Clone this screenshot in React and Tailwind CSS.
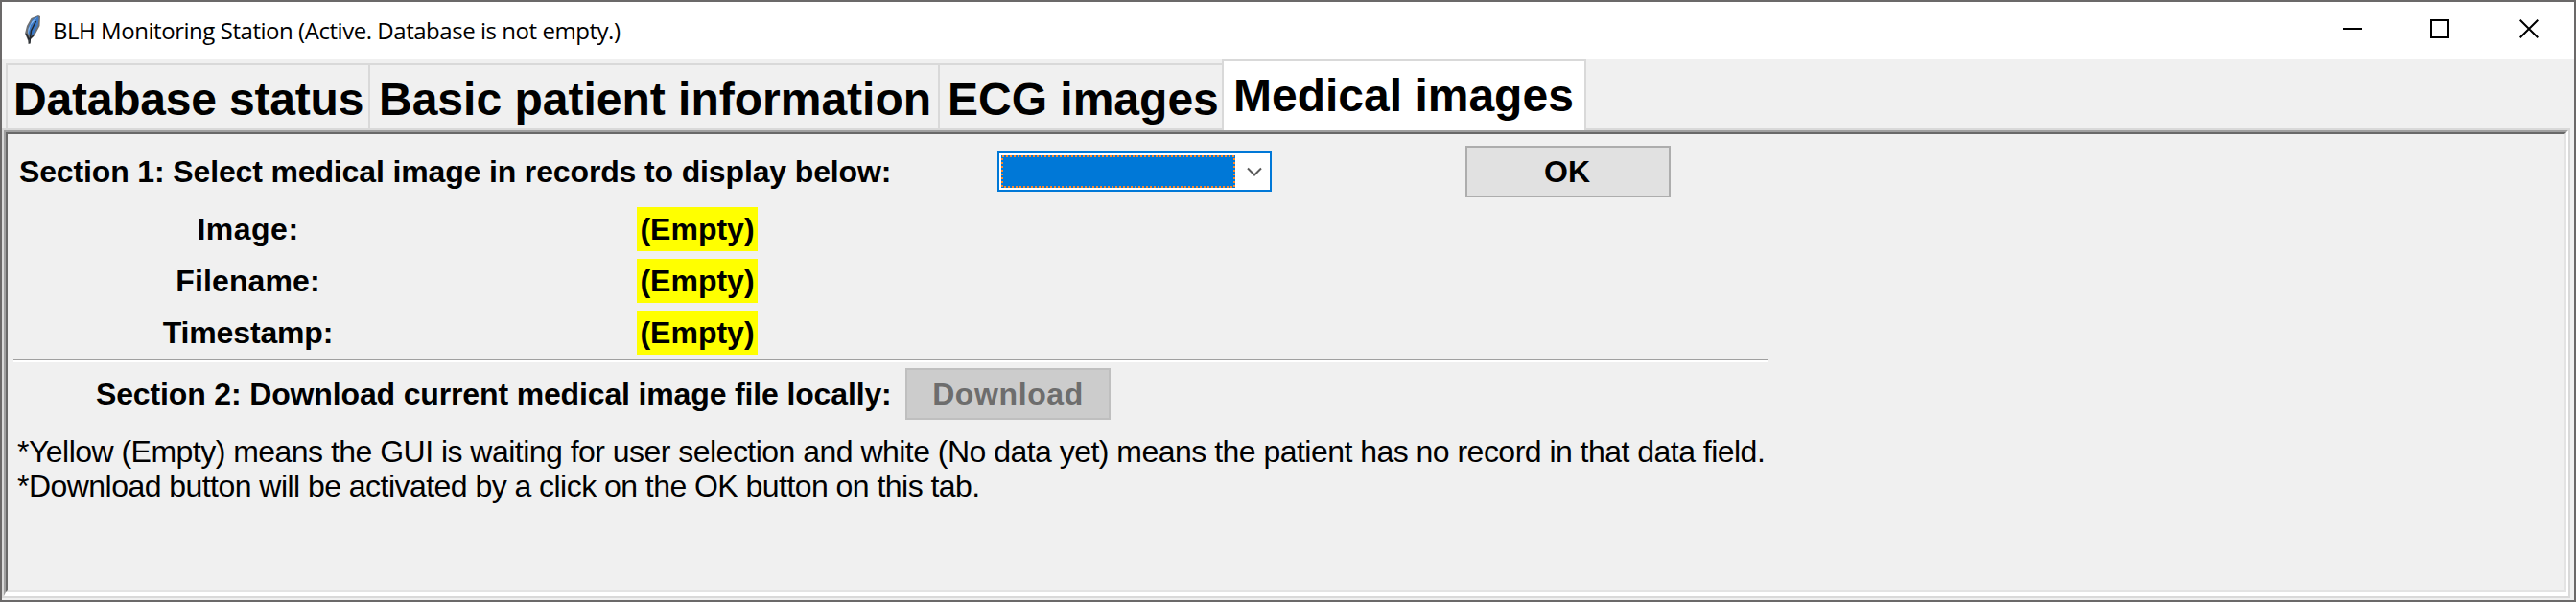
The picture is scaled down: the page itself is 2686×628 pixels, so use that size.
function Feather() {
  return (
    <svg className="mb-[2px] ml-[21px] h-8 w-6 shrink-0" viewBox="0 0 24 32" fill="none">
      <path d="M17 1 L19 2 L18.500 12 L13 22 L9 26 L8.500 31 L6.500 31 L6 27 L3 20 L5 12 L9.500 4 Z" fill="#6f7173" />
      <path d="M16.500 2 L17.500 4 L16.500 12 L11.500 21 L9 23 L6 19 L7 12 L11 5 Z" fill="#3c78c4" />
      <path d="M16 3 L10.500 7 L6.500 15 L6 22 L9 11 Z" fill="#8cbcf0" />
      <path d="M14.500 7 L9.500 17 L7.800 30" stroke="#23282e" strokeWidth="1.500" />
      <path d="M4.500 20 L7 26 L12 22" stroke="#23282e" strokeWidth="1.500" />
    </svg>
  );
}

function TitleBar() {
  return (
    <header className="flex h-[60px] items-center bg-white">
      <Feather />
      <h1 className="ml-2 grow whitespace-pre font-['Open_Sans',sans-serif] text-[24px] leading-[60px] tracking-[-0.46px]">
        BLH Monitoring Station (Active. Database is not empty.)
      </h1>
      <div className="mr-[37px] flex items-center gap-[71px] pb-1">
        <svg className="h-5 w-5" viewBox="0 0 20 20" shapeRendering="crispEdges">
          <rect x="0" y="9" width="20" height="2" fill="#000" />
        </svg>
        <svg className="h-5 w-5" viewBox="0 0 20 20" fill="none" shapeRendering="crispEdges">
          <rect x="1" y="1" width="18" height="18" stroke="#000" strokeWidth="2" />
        </svg>
        <svg className="ml-[2px] h-5 w-5" viewBox="0 0 20 20" fill="none">
          <path d="M0.700 0.700 L19.300 19.300 M19.300 0.700 L0.700 19.300" stroke="#000" strokeWidth="2" />
        </svg>
      </div>
    </header>
  );
}

function Tabs() {
  const tab = "mt-1 h-[68px] border-t-2 border-l-2 border-[#d9d9d9] whitespace-pre";
  return (
    <nav className="flex h-[74px] pl-1 text-[48px] leading-[71px] font-bold">
      <div className={`${tab} w-[378px] pl-[6px] tracking-[-0.2px]`}>Database status</div>
      <div className={`${tab} w-[594px] pl-[9px]`}>Basic patient information</div>
      <div className={`${tab} w-[296px] pl-2`}>ECG images</div>
      <div className="relative z-10 h-[74px] w-[380px] border-x-2 border-t-2 border-[#d9d9d9] bg-white pl-[10px] whitespace-pre">
        Medical images
      </div>
    </nav>
  );
}

function Field({ label, spacing }) {
  return (
    <div className="flex h-[46px] leading-[46px]">
      <div className={`w-[486px] pl-[3px] text-center ${spacing}`}>{label}</div>
      <div className="ml-[164px] w-[126px] bg-[#ffff00] text-center">(Empty)</div>
    </div>
  );
}

function Combobox() {
  return (
    <div className="mt-[6px] flex h-[42px] w-[286px] border-2 border-[#0078d7] bg-white p-[2px]">
      <svg className="h-[34px] w-[244px]" viewBox="0 0 244 34" fill="none" shapeRendering="crispEdges">
        <rect width="244" height="34" fill="#0078d7" />
        <rect x="1" y="1" width="242" height="32" stroke="#ff8728" strokeWidth="2" strokeDasharray="2 2" />
      </svg>
      <svg className="mt-3 ml-3 h-3 w-4" viewBox="0 0 16 12" fill="none">
        <path d="M1 1.500 L8 8.500 L15 1.500" stroke="#5a5a5a" strokeWidth="2" />
      </svg>
    </div>
  );
}

function Panel() {
  return (
    <main className="grow border-2 border-[#d9d9d9]">
      <div className="h-full border-t-2 border-r-2 border-b-4 border-l-2 border-t-[#a0a0a0] border-r-white border-b-white border-l-[#a0a0a0]">
        <div className="h-full border-2 border-t-[#696969] border-r-[#e3e3e3] border-b-[#e3e3e3] border-l-[#696969] pt-3 pl-[6px] text-[32px] font-bold whitespace-pre">
          <div className="flex h-[54px] leading-[54px]">
            <div className="w-[1026px] pl-[6px] tracking-[-0.14px]">
              Section 1: Select medical image in records to display below:
            </div>
            <Combobox />
            <button className="ml-[202px] h-[54px] w-[214px] border-2 border-[#adadad] bg-[#e1e1e1] pr-[2px] leading-[50px]">
              OK
            </button>
          </div>
          <div className="mt-[10px] flex flex-col gap-2">
            <Field label="Image:" spacing="tracking-[0.5px]" />
            <Field label="Filename:" spacing="tracking-[0.1px]" />
            <Field label="Timestamp:" spacing="tracking-[-0.15px]" />
          </div>
          <div className="mt-1 h-1 w-[1830px] border-t-2 border-b-2 border-t-[#a0a0a0] border-b-white" />
          <div className="mt-[6px] flex h-[54px] leading-[54px]">
            <div className="w-[930px] pl-[86px] tracking-[-0.145px]">
              Section 2: Download current medical image file locally:
            </div>
            <button
              disabled
              className="h-[54px] w-[214px] border-2 border-[#bfbfbf] bg-[#cccccc] leading-[50px] tracking-[0.6px] text-[#6d6d6d]"
            >
              Download
            </button>
          </div>
          <div className="mt-[15px] pl-1 leading-[36px] font-normal">
            <p className="tracking-[-0.525px]">
              *Yellow (Empty) means the GUI is waiting for user selection and white (No data yet) means the patient has no record in that data field.
            </p>
            <p className="tracking-[-0.54px]">
              *Download button will be activated by a click on the OK button on this tab.
            </p>
          </div>
        </div>
      </div>
    </main>
  );
}

export default function App() {
  return (
    <div className="flex h-[628px] w-[2686px] flex-col border-2 border-[#6b6969] bg-[#f0f0f0] font-['Liberation_Sans',Arial,sans-serif] text-black">
      <TitleBar />
      <div className="flex grow flex-col">
        <Tabs />
        <div className="-mt-[2px] flex grow pr-1 pb-[2px]">
          <Panel />
        </div>
      </div>
    </div>
  );
}
